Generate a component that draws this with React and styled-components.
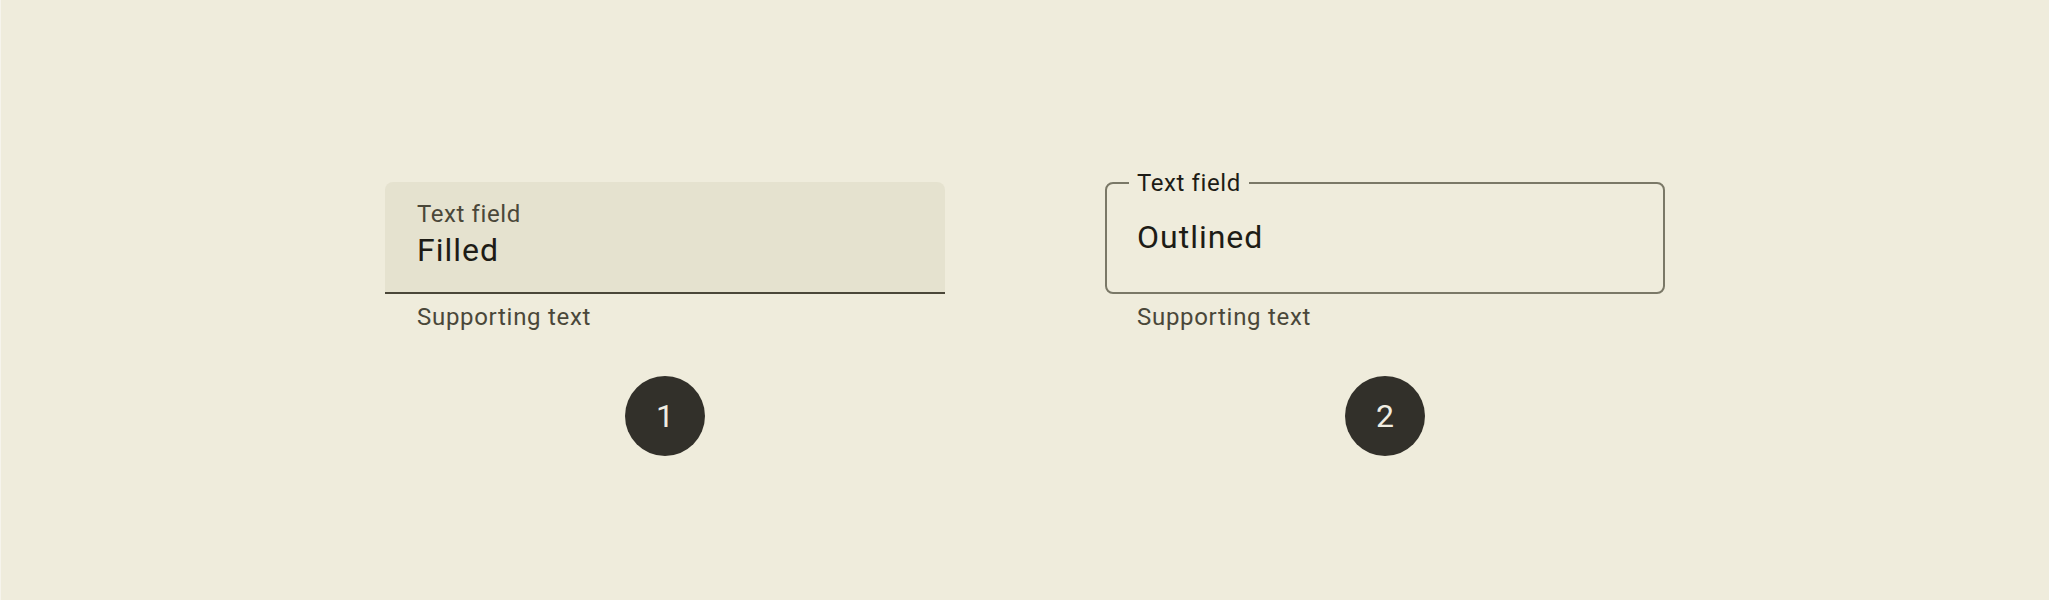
import styled, { createGlobalStyle } from "styled-components";

const GlobalStyle = createGlobalStyle`
  html, body {
    margin: 0;
    padding: 0;
    background: #efecdc;
  }
  body {
    font-family: Roboto, "Liberation Sans", sans-serif;
  }
`;

const Page = styled.div`
  box-sizing: border-box;
  height: 600px;
  padding-top: 182px;
  border-left: 1px solid #f6f4ec;
  display: flex;
  justify-content: center;
  gap: 160px;
  background: #efecdc;
`;

const Column = styled.div`
  width: 560px;
  display: flex;
  flex-direction: column;
`;

const FilledBox = styled.div`
  box-sizing: border-box;
  height: 112px;
  padding: 16px 32px 0;
  background: #e5e2cf;
  border-radius: 8px 8px 0 0;
  border-bottom: 2px solid #4a4739;
`;

const OutlinedBox = styled.div`
  position: relative;
  box-sizing: border-box;
  height: 112px;
  padding: 0 30px 2px;
  border: 2px solid #7a7867;
  border-radius: 8px;
  display: flex;
  align-items: center;
`;

const Label = styled.div`
  font-size: 24px;
  line-height: 32px;
  letter-spacing: 0.6px;
  color: ${(p) => (p.$floating ? "#1d1c16" : "#4a4739")};
`;

const NotchLabel = styled(Label)`
  position: absolute;
  top: -17px;
  left: 22px;
  padding: 0 8px;
  background: #efecdc;
`;

const Value = styled.div`
  font-size: 32px;
  line-height: ${(p) => p.$lh}px;
  letter-spacing: 1px;
  color: #1d1c16;
`;

const Supporting = styled.div`
  padding: 7px 32px 0;
  font-size: 24px;
  line-height: 32px;
  letter-spacing: 0.7px;
  color: #4a4739;
`;

const Badge = styled.div`
  align-self: center;
  margin-top: 43px;
  width: 80px;
  height: 80px;
  border-radius: 50%;
  background: #32302a;
  color: #f0ede2;
  font-size: 32px;
  display: flex;
  align-items: center;
  justify-content: center;
`;

export default function App() {
  return (
    <>
      <GlobalStyle />
      <Page>
        <Column>
          <FilledBox>
            <Label>Text field</Label>
            <Value $lh={40}>Filled</Value>
          </FilledBox>
          <Supporting>Supporting text</Supporting>
          <Badge>1</Badge>
        </Column>
        <Column>
          <OutlinedBox>
            <NotchLabel $floating>Text field</NotchLabel>
            <Value $lh={48}>Outlined</Value>
          </OutlinedBox>
          <Supporting>Supporting text</Supporting>
          <Badge>2</Badge>
        </Column>
      </Page>
    </>
  );
}
